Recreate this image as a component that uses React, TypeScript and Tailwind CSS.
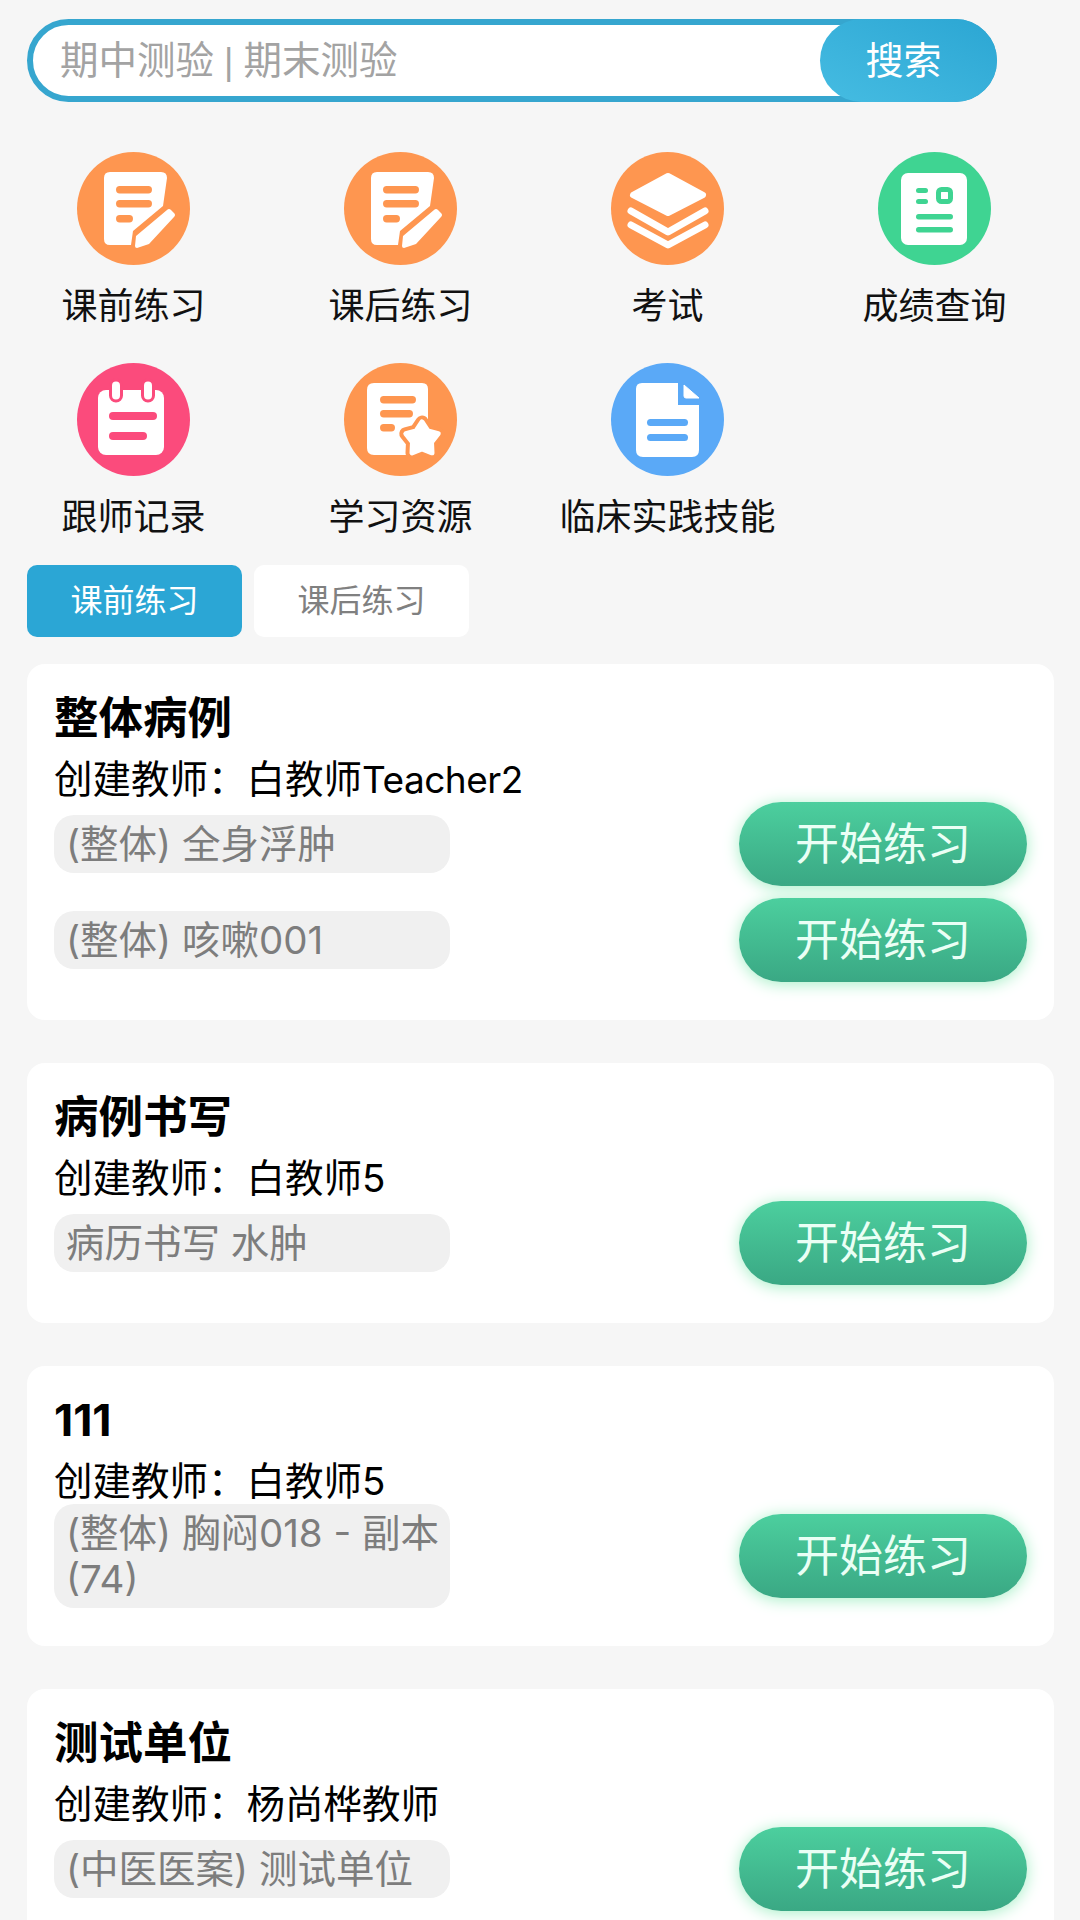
import React from "react";

const O = "#fe9650";

function Circle({ color, children }: { color: string; children: React.ReactNode }) {
  return (
    <svg width="113" height="113" viewBox="0 0 113 113" className="block">
      <circle cx="56.5" cy="56.5" r="56.5" fill={color} />
      {children}
    </svg>
  );
}

function PencilIcon() {
  return (
    <Circle color={O}>
      <path d="M33 20 H84 Q90 20 90 26 L86 54 L56 79 L54 93 H33 Q27 93 27 87 V26 Q27 20 33 20 Z" fill="#fff" />
      <g fill={O}>
        <rect x="39" y="34" width="36" height="7.5" rx="3.7" />
        <rect x="39" y="48" width="36" height="7.5" rx="3.7" />
        <rect x="39" y="63" width="17" height="7.5" rx="3.7" />
      </g>
      <path d="M60 96 Q58 96 58 94 L59 84 L90 58 Q92 56 94 58 L97 61 Q99 63 97 65 L72 92 Z" fill="#fff" />
    </Circle>
  );
}

function LayersIcon() {
  return (
    <Circle color={O}>
      <path d="M57 24 L92 43 L57 61 L22 43 Z" fill="#fff" stroke="#fff" strokeWidth="6" strokeLinejoin="round" />
      <path d="M20 59 L57 80 L94 59" fill="none" stroke="#fff" strokeWidth="7" strokeLinecap="round" strokeLinejoin="round" />
      <path d="M20 73 L57 93 L94 73" fill="none" stroke="#fff" strokeWidth="7" strokeLinecap="round" strokeLinejoin="round" />
    </Circle>
  );
}

function ReportIcon() {
  const g = "#3fd492";
  return (
    <Circle color={g}>
      <rect x="23" y="21" width="66" height="72" rx="7" fill="#fff" />
      <g fill={g}>
        <rect x="38" y="36" width="12" height="5" rx="2.5" />
        <rect x="38" y="47" width="12" height="5" rx="2.5" />
        <rect x="38" y="62" width="37" height="5.5" rx="2.7" />
        <rect x="38" y="75" width="37" height="5.5" rx="2.7" />
      </g>
      <rect x="60.5" y="37.5" width="12" height="12" rx="3" fill="none" stroke={g} strokeWidth="5" />
    </Circle>
  );
}

function NoteIcon() {
  const p = "#fb4b7c";
  return (
    <Circle color={p}>
      <rect x="21" y="27" width="66" height="65" rx="8" fill="#fff" />
      <rect x="33.5" y="17" width="11" height="21" rx="5.5" fill="#fff" stroke={p} strokeWidth="3" />
      <rect x="65.5" y="17" width="11" height="21" rx="5.5" fill="#fff" stroke={p} strokeWidth="3" />
      <rect x="32" y="49" width="48" height="8" rx="4" fill={p} />
      <rect x="32" y="69" width="38" height="8" rx="4" fill={p} />
    </Circle>
  );
}

const STAR =
  "M78 59 L83.9 67.9 L94.2 70.7 L87.5 79.1 L88 89.8 L78 86 L68 89.8 L68.5 79.1 L61.8 70.7 L72.1 67.9 Z";

function StarIcon() {
  return (
    <Circle color={O}>
      <path d="M30 20 H78 Q84 20 84 26 V70 H62 V92 H30 Q23 92 23 85 V27 Q23 20 30 20 Z" fill="#fff" />
      <g fill={O}>
        <rect x="36" y="33" width="36" height="7.5" rx="3.7" />
        <rect x="36" y="47" width="33" height="7.5" rx="3.7" />
        <rect x="36" y="61" width="15" height="7.5" rx="3.7" />
      </g>
      <path d={STAR} fill={O} stroke={O} strokeWidth="13" strokeLinejoin="round" />
      <path d={STAR} fill="#fff" stroke="#fff" strokeWidth="5" strokeLinejoin="round" />
    </Circle>
  );
}

function FileIcon() {
  const b = "#5aa9f7";
  return (
    <Circle color={b}>
      <path d="M31 20 H67 V42 H88 V87 Q88 94 81 94 H32 Q25 94 25 87 V26 Q25 20 31 20 Z" fill="#fff" />
      <path d="M73 22 L88 35 H75 Q73 35 73 33 Z" fill="#fff" stroke="#fff" strokeWidth="1" strokeLinejoin="round" />
      <rect x="36" y="56" width="41" height="7" rx="3.5" fill={b} />
      <rect x="36" y="71" width="41" height="7" rx="3.5" fill={b} />
    </Circle>
  );
}

const entries: [React.ReactNode, string][] = [
  [<PencilIcon />, "课前练习"],
  [<PencilIcon />, "课后练习"],
  [<LayersIcon />, "考试"],
  [<ReportIcon />, "成绩查询"],
  [<NoteIcon />, "跟师记录"],
  [<StarIcon />, "学习资源"],
  [<FileIcon />, "临床实践技能"],
];

const cards: { title: string; teacher: React.ReactNode; items: string[] }[] = [
  {
    title: "整体病例",
    teacher: (
      <>
        白教师<span className="text-[37px] tracking-[-0.5px]">Teacher2</span>
      </>
    ),
    items: ["(整体) 全身浮肿", "(整体) 咳嗽001"],
  },
  { title: "病例书写", teacher: "白教师5", items: ["病历书写 水肿"] },
  { title: "111", teacher: "白教师5", items: ["(整体) 胸闷018 - 副本 (74)"] },
  { title: "测试单位", teacher: "杨尚桦教师", items: ["(中医医案) 测试单位"] },
];

export default function App() {
  return (
    <div
      lang="zh-CN"
      className="h-[1920px] w-[1080px] overflow-hidden bg-[#f6f6f6] pt-[19px] font-['Inter','Noto_Sans_CJK_SC',sans-serif] text-black"
    >
      <div className="ml-[27px] flex h-[83px] w-[970px] items-center rounded-full border-[6px] border-[#36a6cf] bg-white">
        <div className="flex-1 pl-[27px] text-[38.5px] leading-[46px] text-[#a3a3a3]">
          期中测验<span className="px-[10px] font-['Liberation_Sans'] text-[36px]">|</span>期末测验
        </div>
        <div className="-my-[6px] -mr-[6px] flex h-[83px] w-[177px] items-center justify-center rounded-full bg-gradient-to-tr from-[#45bce2] to-[#2ba6d3] pr-[10px] text-[38px] text-white">
          搜索
        </div>
      </div>

      <div className="mt-[50px] grid w-[1068px] grid-cols-4 gap-y-[34px]">
        {entries.map(([icon, label], i) => (
          <div key={i} className="flex flex-col items-center">
            {icon}
            <div className="mt-[18px] whitespace-nowrap text-[36px] leading-[46px] text-[#111]">{label}</div>
          </div>
        ))}
      </div>

      <div className="ml-[27px] mt-[25px] flex gap-[12px]">
        <div className="flex h-[72px] w-[215px] items-center justify-center rounded-[10px] bg-[#2ba6d5] text-[32px] text-white">
          课前练习
        </div>
        <div className="flex h-[72px] w-[215px] items-center justify-center rounded-[10px] bg-white text-[32px] text-[#808080]">
          课后练习
        </div>
      </div>

      <div className="ml-[27px] mt-[27px] flex w-[1027px] flex-col gap-[43px]">
        {cards.map((c) => (
          <div key={c.title} className="rounded-[18px] bg-white pb-[38px] pl-[27px] pr-[27px] pt-[28px]">
            <div className="h-[52px] text-[44.5px] font-bold leading-[52px]">{c.title}</div>
            <div className="mt-[12px] h-[46px] text-[38.5px] leading-[46px]">创建教师：{c.teacher}</div>
            <div className="flex flex-col gap-[12px]">
              {c.items.map((it) => (
                <div key={it} className="flex items-center justify-between">
                  <div className="w-[396px] rounded-[20px] bg-[#f0f0f0] py-[6px] pl-[12px] pr-[4px] text-[38.5px] leading-[46px] text-[#7d7d7d]">
                    {it}
                  </div>
                  <div className="flex h-[84px] w-[288px] items-center justify-center rounded-full bg-gradient-to-b from-[#4ccf9e] to-[#3aa884] text-[44px] text-[#eafff5] shadow-[0_2px_16px_#a6efc6]">
                    开始练习
                  </div>
                </div>
              ))}
            </div>
          </div>
        ))}
      </div>
    </div>
  );
}
